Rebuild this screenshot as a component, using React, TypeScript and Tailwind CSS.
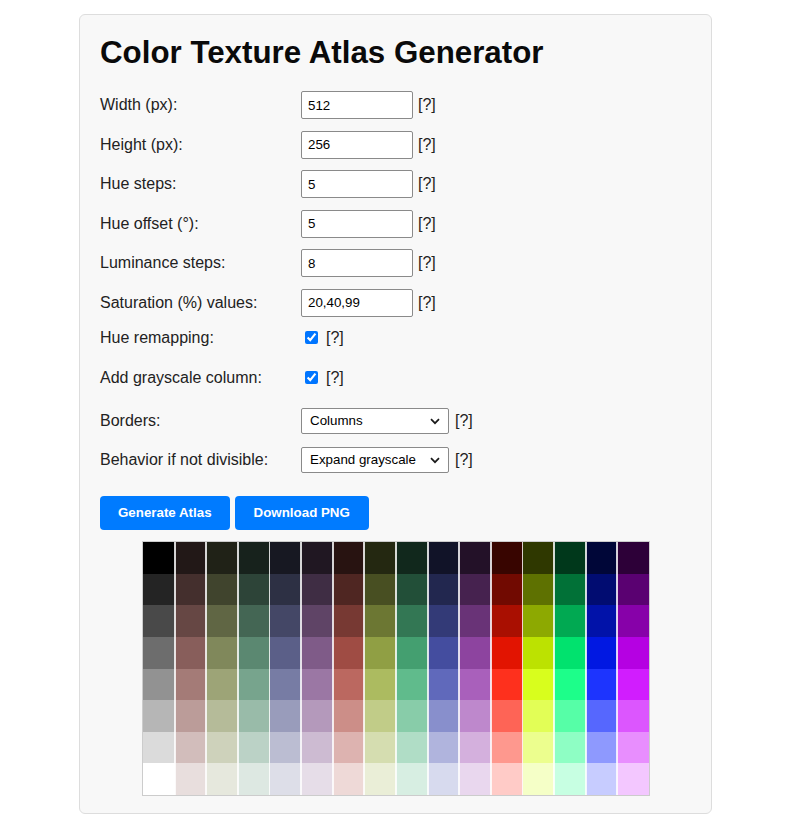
import React from "react";

const HUES = [5, 70, 149, 234, 288];
const SATS = [20, 40, 99];
const ROWS = 8;

function hsl(h: number, s: number, l: number) {
  return `hsl(${h}, ${s}%, ${l}%)`;
}

function buildColumns(): string[][] {
  const cols: string[][] = [];
  const gray: string[] = [];
  for (let i = 0; i < ROWS; i++) {
    const v = Math.round((i * 255) / (ROWS - 1));
    gray.push(`rgb(${v},${v},${v})`);
  }
  cols.push(gray);
  for (const s of SATS) {
    for (const h of HUES) {
      const c: string[] = [];
      for (let i = 0; i < ROWS; i++) {
        c.push(hsl(h, s, ((i + 1) / (ROWS + 1)) * 100));
      }
      cols.push(c);
    }
  }
  return cols;
}

function Atlas() {
  const cols = buildColumns();
  const cw = 512 / cols.length;
  const rh = 256 / ROWS;
  return (
    <div className="mx-auto mt-[11px] w-[508px] h-[255px] border border-[#cccccc]">
      <svg
        width="506"
        height="253"
        viewBox="0 0 512 256"
        preserveAspectRatio="none"
        className="block"
        shapeRendering="crispEdges"
      >
        {cols.map((c, ci) =>
          c.map((color, ri) => (
            <rect
              key={`${ci}-${ri}`}
              x={ci * cw}
              y={ri * rh}
              width={cw}
              height={rh}
              fill={color}
            />
          ))
        )}
        {cols.slice(1).map((_, k) => (
          <rect
            key={`sep-${k}`}
            x={(k + 1) * cw - 1}
            y={0}
            width={2}
            height={256}
            fill="#ffffff"
            fillOpacity={0.82}
          />
        ))}
      </svg>
    </div>
  );
}

function Help() {
  return <span className="text-[16px] text-[#222]">[?]</span>;
}

function InputRow({ label, value, className }: { label: string; value: string; className?: string }) {
  return (
    <div className={`flex items-center h-[28px] ${className ?? ""}`}>
      <span className="w-[201px] shrink-0 text-[16px] text-[#222]">{label}</span>
      <input
        readOnly
        value={value}
        className="w-[112px] h-[28px] border border-[#8a8a8a] rounded-[2px] bg-white pl-[6px] text-[13.33px] text-black outline-none"
      />
      <span className="ml-[5px]">
        <Help />
      </span>
    </div>
  );
}

function CheckRow({ label, className }: { label: string; className?: string }) {
  return (
    <div className={`flex items-center h-[20px] ${className ?? ""}`}>
      <span className="w-[201px] shrink-0 text-[16px] text-[#222]">{label}</span>
      <input
        type="checkbox"
        defaultChecked
        className="ml-[4px] w-[13px] h-[13px] accent-[#0075ff] m-0"
      />
      <span className="ml-[8px]">
        <Help />
      </span>
    </div>
  );
}

function SelectRow({ label, value, className }: { label: string; value: string; className?: string }) {
  return (
    <div className={`flex items-center h-[26px] ${className ?? ""}`}>
      <span className="w-[201px] shrink-0 text-[16px] text-[#222]">{label}</span>
      <div className="relative w-[148px] h-[26px]">
        <select
          defaultValue={value}
          className="appearance-none w-[148px] h-[26px] border border-[#8a8a8a] rounded-[2px] bg-white pl-[8px] text-[13.33px] text-black outline-none"
        >
          <option>{value}</option>
        </select>
        <svg
          className="absolute right-[9px] top-[10px] pointer-events-none"
          width="10"
          height="7"
          viewBox="0 0 10 7"
        >
          <polyline points="1,1.2 5,5.2 9,1.2" fill="none" stroke="#1a1a1a" strokeWidth="1.7" />
        </svg>
      </div>
      <span className="ml-[6px]">
        <Help />
      </span>
    </div>
  );
}

export default function App() {
  return (
    <div className="min-h-[836px] bg-white font-['Liberation_Sans',Arial,sans-serif]">
      <div className="pt-[14px] pl-[79px]">
        <div className="w-[633px] border border-[#dddddd] rounded-[6px] bg-[#f8f8f8] px-[20px] pt-[19px] pb-[17px]">
          <h1 className="text-[31.3px] leading-[37px] font-bold text-[#0a0a0a] mb-[20px]">
            Color Texture Atlas Generator
          </h1>
          <div className="flex flex-col">
            <InputRow label="Width (px):" value="512" />
            <InputRow label="Height (px):" value="256" className="mt-[11.6px]" />
            <InputRow label="Hue steps:" value="5" className="mt-[11.6px]" />
            <InputRow label="Hue offset (°):" value="5" className="mt-[11.6px]" />
            <InputRow label="Luminance steps:" value="8" className="mt-[11.6px]" />
            <InputRow label="Saturation (%) values:" value="20,40,99" className="mt-[11.6px]" />
            <CheckRow label="Hue remapping:" className="mt-[11px]" />
            <CheckRow label="Add grayscale column:" className="mt-[20px]" />
            <SelectRow label="Borders:" value="Columns" className="mt-[20px]" />
            <SelectRow label="Behavior if not divisible:" value="Expand grayscale" className="mt-[13px]" />
            <div className="flex gap-[5px] mt-[23px]">
              <button className="h-[34px] px-[18px] rounded-[4px] bg-[#007bff] text-white font-bold text-[13.33px]">
                Generate Atlas
              </button>
              <button className="h-[34px] px-[19px] rounded-[4px] bg-[#007bff] text-white font-bold text-[13.33px]">
                Download PNG
              </button>
            </div>
            <Atlas />
          </div>
        </div>
      </div>
    </div>
  );
}
